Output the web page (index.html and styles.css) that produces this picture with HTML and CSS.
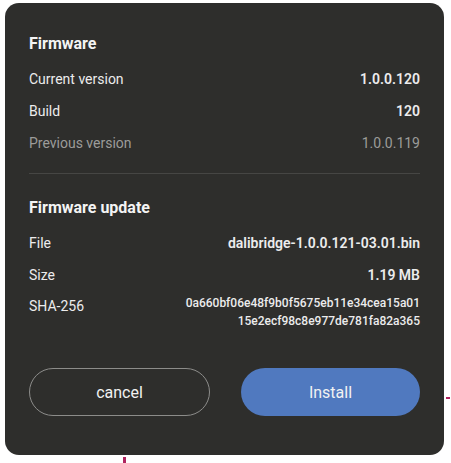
FILE: index.html
```html
<html>

<head>
  <meta charset="utf8">
  <title>Firmware</title>
  <link rel="stylesheet" href="styles.css">
</head>

<body>
  <div class="dialog">
    <section class="group">
      <h2>Firmware</h2>
      <div class="row">
        <span class="label">Current version</span>
        <span class="value">1.0.0.120</span>
      </div>
      <div class="row">
        <span class="label">Build</span>
        <span class="value">120</span>
      </div>
      <div class="row muted">
        <span class="label">Previous version</span>
        <span class="value">1.0.0.119</span>
      </div>
    </section>
    <hr>
    <section class="group">
      <h2>Firmware update</h2>
      <div class="row">
        <span class="label">File</span>
        <span class="value">dalibridge-1.0.0.121-03.01.bin</span>
      </div>
      <div class="row">
        <span class="label">Size</span>
        <span class="value">1.19 MB</span>
      </div>
      <div class="row hash-row">
        <span class="label">SHA-256</span>
        <span class="value hash">0a660bf06e48f9b0f5675eb11e34cea15a01<br>15e2ecf98c8e977de781fa82a365</span>
      </div>
    </section>
    <div class="actions">
      <button class="btn cancel">cancel</button>
      <button class="btn install">Install</button>
    </div>
  </div>
  <span class="mark mark-right"></span>
  <span class="mark mark-bottom"></span>
</body>

</html>
```

FILE: styles.css
```css
body {
  margin: 0;
  background: #fff;
  font: 14px/20px Roboto, "Liberation Sans", sans-serif;
  position: relative;
  height: 463px;
  overflow: hidden;
}

.dialog {
  box-sizing: border-box;
  width: 439px;
  height: 452px;
  margin: 3px 0 0 5px;
  padding: 31px 24px 39px;
  background: #2e2e2c;
  border-radius: 14px;
  color: #ececec;
  display: flex;
  flex-direction: column;
}

h2 {
  margin: 0 0 9px;
  font-size: 16px;
  line-height: 20px;
  font-weight: 700;
  color: #f4f4f4;
}

.row {
  display: flex;
  justify-content: space-between;
  padding: 6px 0;
}

.value {
  font-weight: 600;
  text-align: right;
}

.muted {
  color: #9c9c9a;
}

.muted .value {
  font-weight: 400;
}

.hash-row {
  padding-top: 5px;
}

.hash {
  font-size: 12px;
  line-height: 18px;
  font-weight: 500;
  margin-top: -2px;
}

hr {
  border: 0;
  border-top: 1px solid #464644;
  margin: 14px 0 24px;
}

.actions {
  margin-top: auto;
  display: flex;
  gap: 31px;
}

.btn {
  flex: 1;
  height: 48px;
  border-radius: 24px;
  font: 16px Roboto, "Liberation Sans", sans-serif;
  color: #f2f2f2;
  cursor: pointer;
}

.cancel {
  background: transparent;
  border: 1px solid #8c8c8a;
}

.install {
  background: #5079bf;
  border: 0;
}

.mark {
  position: absolute;
  background: #b0245f;
}

.mark-right {
  left: 446px;
  top: 397px;
  width: 4px;
  height: 2px;
}

.mark-bottom {
  left: 123px;
  top: 457px;
  width: 3px;
  height: 6px;
}
```
